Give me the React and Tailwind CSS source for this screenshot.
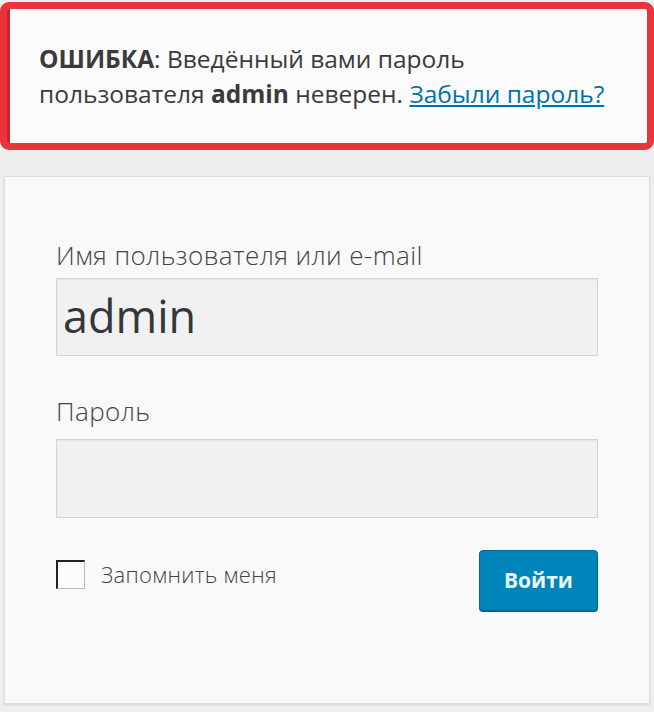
const App = () => {
  return (
    <div
      className="w-[654px] h-[712px] bg-[#efefef] overflow-hidden text-[#444]"
      style={{ fontFamily: '"Open Sans", "Noto Sans", sans-serif' }}
    >
      <div className="mt-[2px] h-[148px] rounded-[9px] border-[7px] border-[#e8343a] bg-[#e8343a]">
        <div className="h-full border-l-[3px] border-[#c9262b] bg-[#fbfbfb] pl-[29px] pt-[32px] text-[24.5px] leading-[35px] rounded-[2px] text-[#3a3a3a]">
          <p>
            <strong className="font-bold">ОШИБКА</strong>: Введённый вами пароль
          </p>
          <p>
            пользователя <strong className="font-bold">admin</strong> неверен.{' '}
            <a href="#" className="text-[#0073aa] underline underline-offset-2">
              Забыли пароль?
            </a>
          </p>
        </div>
      </div>

      <div className="mt-[26px] mx-[4px] h-[528px] border border-[#dedede] bg-[#f9f9f9] shadow-[0_1px_2px_rgba(0,0,0,0.12)] px-[51px] pt-[61px]">
        <label className="block text-[26px] leading-[34px] font-light tracking-[0.4px] text-[#444]">Имя пользователя или e-mail</label>
        <div className="mt-[6px] h-[78px] border border-[#d4d4d4] bg-[#f1f1f1] shadow-[inset_0_1px_2px_rgba(0,0,0,0.06)] flex items-center pl-[6px] pb-[3px] text-[45px] text-[#32373c]">
          admin
        </div>

        <label className="block mt-[38px] text-[26px] leading-[34px] font-light tracking-[0.4px] text-[#444]">Пароль</label>
        <div className="mt-[11px] h-[79px] border border-[#d4d4d4] bg-[#f1f1f1] shadow-[inset_0_1px_2px_rgba(0,0,0,0.06)]" />

        <div className="mt-[32px] flex items-start justify-between">
          <label className="flex items-center gap-[16px] mt-[8px] text-[22px] font-light tracking-[0.3px] text-[#444]">
            <span className="w-[29px] h-[29px] border border-[#b4b9be] border-t-[2px] border-l-[2px] border-t-[#222] border-l-[#222] bg-[#fbfbfb]" />
            Запомнить меня
          </label>
          <button className="w-[119px] h-[61px] rounded-[4px] bg-[#0085ba] border border-[#006799] text-[#e8f4fa] text-[21px] font-bold shadow-[0_1px_0_#006799]">
            Войти
          </button>
        </div>
      </div>
    </div>
  )
}

export default App
